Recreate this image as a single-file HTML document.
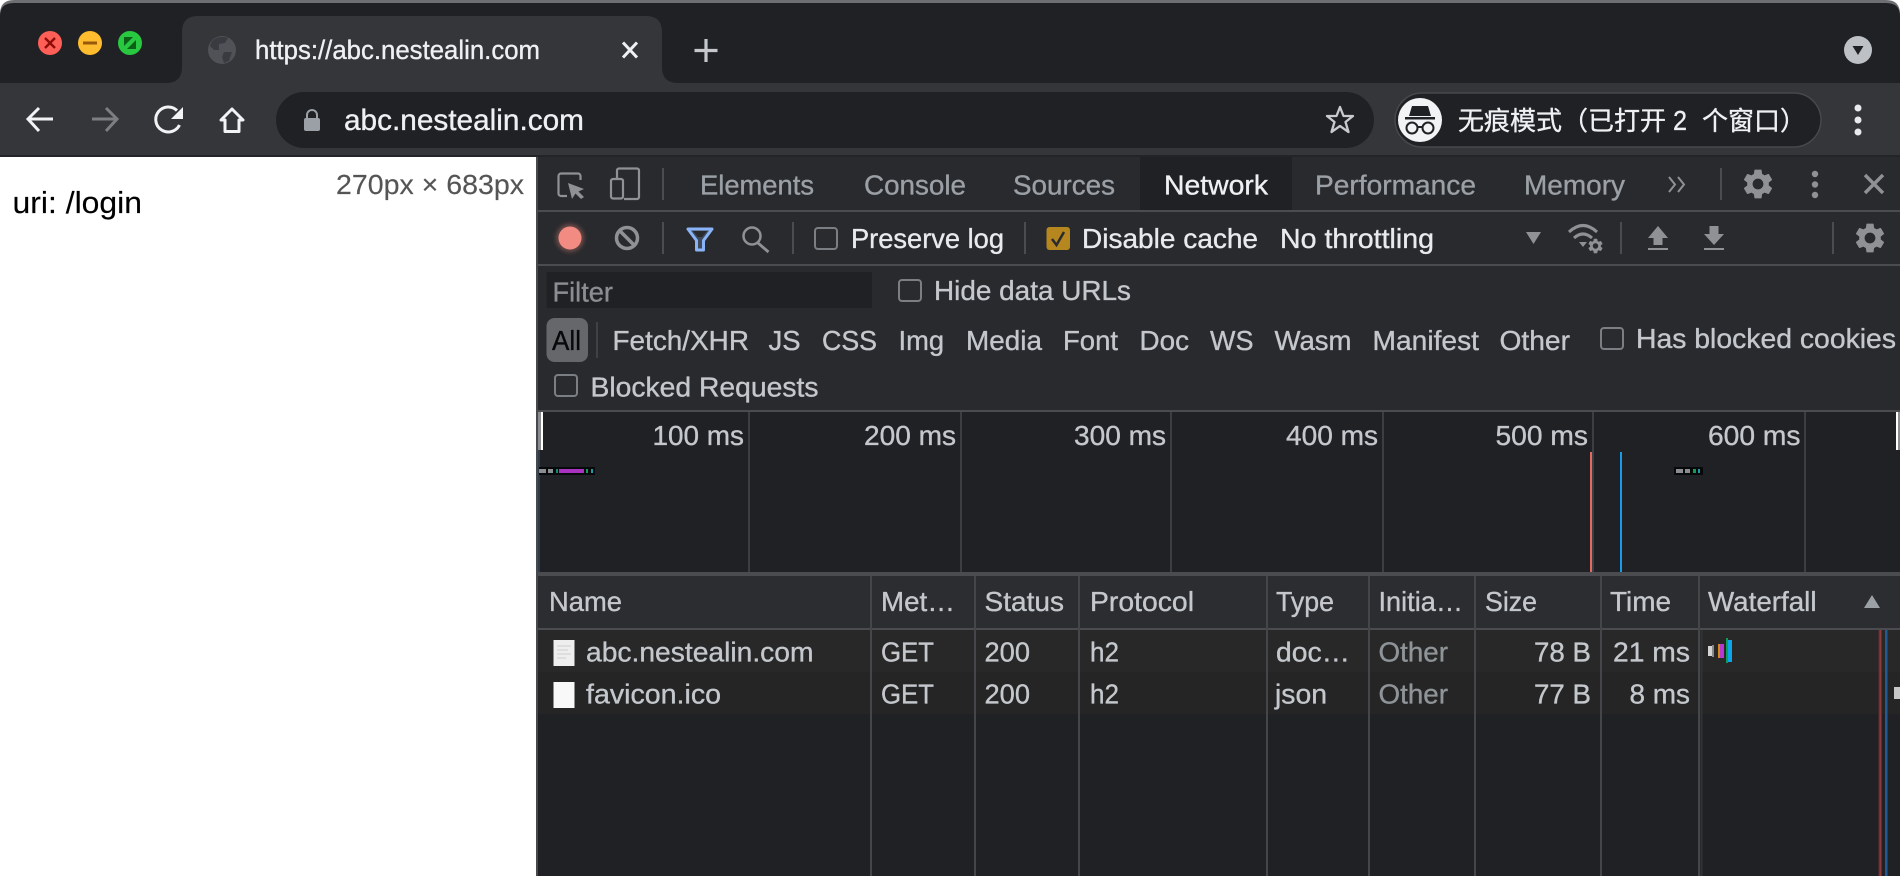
<!DOCTYPE html>
<html lang="zh">
<head>
<meta charset="utf-8">
<title>DevTools Network</title>
<style>
html,body{margin:0;padding:0;background:#fff;width:1900px;height:876px;overflow:hidden}
svg{display:block}
text{font-family:"Liberation Sans","Noto Sans CJK SC",sans-serif;font-size:27.5px;fill:#c4c8cd;stroke:#c4c8cd;stroke-width:.35}
.t{fill:#9aa0a6;stroke:#9aa0a6}
.w{fill:#eef0f2;stroke:#eef0f2}
.o{fill:#8f9499;stroke:#8f9499}
.lbl{fill:#c4c8cd;stroke:#c4c8cd}
.br{fill:#e8eaed;stroke:#e8eaed}
.cb{fill:#2a2b2e;stroke:#7b7e82;stroke-width:2}
.v{stroke:#4a4c50;stroke-width:2}
.col{stroke:#444649;stroke-width:2}
.grid{stroke:#3c3e42;stroke-width:2}
</style>
</head>
<body>
<svg width="1900" height="876" viewBox="0 0 1900 876" xmlns="http://www.w3.org/2000/svg">
<defs>
<path id="gear" d="M19.14 12.94c.04-.3.06-.61.06-.94 0-.32-.02-.64-.07-.94l2.03-1.58a.49.49 0 0 0 .12-.61l-1.92-3.32a.488.488 0 0 0-.59-.22l-2.39.96c-.5-.38-1.03-.7-1.62-.94l-.36-2.54a.484.484 0 0 0-.48-.41h-3.84c-.24 0-.43.17-.47.41l-.36 2.54c-.59.24-1.13.57-1.62.94l-2.39-.96c-.22-.08-.47 0-.59.22L2.74 8.87c-.12.21-.08.47.12.61l2.03 1.58c-.05.3-.09.63-.09.94s.02.64.07.94l-2.03 1.58a.49.49 0 0 0-.12.61l1.92 3.32c.12.22.37.29.59.22l2.39-.96c.5.38 1.03.7 1.62.94l.36 2.54c.05.24.24.41.48.41h3.84c.24 0 .44-.17.47-.41l.36-2.54c.59-.24 1.13-.56 1.62-.94l2.39.96c.22.08.47 0 .59-.22l1.92-3.32c.12-.22.07-.47-.12-.61l-2.01-1.58zM12 15.6c-1.98 0-3.6-1.62-3.6-3.6s1.62-3.6 3.6-3.6 3.6 1.62 3.6 3.6-1.62 3.6-3.6 3.6z"/>
<filter id="glow" x="-50%" y="-50%" width="200%" height="200%"><feGaussianBlur stdDeviation="2"/></filter>
</defs>

<!-- window background -->
<rect width="1900" height="876" fill="#fff"/>
<path d="M0 157V14Q0 0 14 0H1886Q1900 0 1900 14V157Z" fill="#6e6f72"/>
<path d="M0 157V16Q0 3 14 3H1886Q1900 3 1900 16V157Z" fill="#202124"/>
<!-- toolbar -->
<rect x="0" y="83" width="1900" height="73" fill="#35363a"/>
<rect x="0" y="155" width="1900" height="2" fill="#232427"/>
<!-- tab -->
<path d="M166 83Q182 83 182 67V32Q182 16 198 16H646Q662 16 662 32V67Q662 83 678 83Z" fill="#35363a"/>

<!-- traffic lights -->
<circle cx="50" cy="43" r="12" fill="#ff5f57"/>
<path d="M45 38L55 48M55 38L45 48" stroke="#8e0d08" stroke-width="2.4"/>
<circle cx="90" cy="43" r="12" fill="#febc2e"/>
<rect x="83" y="41.500" width="14" height="3" fill="#985a0a"/>
<circle cx="130" cy="43" r="12" fill="#28c840"/>
<path d="M124 37H133L124 46ZM136 49H127L136 40Z" fill="#0b5f17"/>

<!-- favicon globe -->
<circle cx="222" cy="50" r="14" fill="#505257"/>
<path d="M213 40Q220 35 228 38L225 43L219 44L219 50L214 50L210 46Q211 42 213 40ZM224 52L232 52L229 61L224 63L222 57Z" fill="#3a3b40"/>
<text x="255" y="59" style="font-size:26.5px" class="w" textLength="285" lengthAdjust="spacingAndGlyphs">https://abc.nestealin.com</text>
<path d="M623 42.500L637 57.500M637 42.500L623 57.500" stroke="#eef0f2" stroke-width="3" fill="none"/>
<path d="M706 39V62M694.500 50.500H717.500" stroke="#c4c7cc" stroke-width="3.200" fill="none"/>

<!-- profile dropdown -->
<circle cx="1858" cy="50" r="14" fill="#bdc1c6"/>
<path d="M1852.500 46H1863.500L1858 55Z" fill="#202124"/>

<!-- nav icons -->
<path d="M53 119H29M39 108L28 119L39 131" stroke="#f1f3f4" stroke-width="3" fill="none"/>
<path d="M92 119H116M106 108L117 119L106 131" stroke="#7c7e82" stroke-width="3" fill="none"/>
<path d="M179.500 125A12.500 12.500 0 1 1 177 110.500" stroke="#f1f3f4" stroke-width="3" fill="none"/>
<path d="M183 107V119H171Z" fill="#f1f3f4"/>
<path d="M232 109L243 120H239V131.500H225V120H221Z" stroke="#f1f3f4" stroke-width="3" fill="none" stroke-linejoin="round"/>

<!-- address bar -->
<rect x="276" y="92" width="1098" height="56" rx="28" fill="#202124"/>
<path d="M307 119V115A5 5 0 0 1 317 115V119" stroke="#9aa0a6" stroke-width="2" fill="none"/>
<rect x="304" y="118" width="16" height="13" rx="2" fill="#9aa0a6"/>
<text x="344" y="130" style="font-size:29.5px" class="w" textLength="240" lengthAdjust="spacingAndGlyphs">abc.nestealin.com</text>
<path d="M1340 107L1343.500 116H1353L1345.500 122L1348.500 132L1340 126L1331.500 132L1334.500 122L1327 116H1336.500Z" stroke="#c8cacd" stroke-width="2.300" fill="none" stroke-linejoin="round"/>

<!-- incognito pill -->
<rect x="1395" y="93" width="426" height="54" rx="27" fill="#202124" stroke="#47484c" stroke-width="1.500"/>
<circle cx="1420" cy="120" r="22" fill="#f1f3f4"/>
<path d="M1412 106L1428 106L1431 116H1409Z" fill="#202124"/>
<rect x="1405" y="117" width="30" height="2.500" fill="#202124"/>
<circle cx="1412" cy="128" r="5.500" fill="none" stroke="#202124" stroke-width="2"/>
<circle cx="1428" cy="128" r="5.500" fill="none" stroke="#202124" stroke-width="2"/>
<path d="M1417 127H1423" stroke="#202124" stroke-width="2"/>
<text x="1458" y="130" style="font-size:26px" class="w">无痕模式（已打开</text>
<text x="1673" y="130" style="font-size:28px" class="w" textLength="14" lengthAdjust="spacingAndGlyphs">2</text>
<text x="1702" y="130" style="font-size:26px" class="w">个窗口）</text>
<circle cx="1858" cy="108" r="3.500" fill="#e8eaed"/>
<circle cx="1858" cy="120" r="3.500" fill="#e8eaed"/>
<circle cx="1858" cy="132" r="3.500" fill="#e8eaed"/>

<!-- page -->
<rect x="0" y="157" width="537" height="719" fill="#fff"/>
<text x="336" y="194" style="font-size:27.5px;fill:#555;stroke:#555;stroke-width:.15" textLength="188" lengthAdjust="spacingAndGlyphs">270px × 683px</text>
<text x="12.500" y="213" style="font-size:31px;fill:#000;stroke:#000;stroke-width:.15" textLength="129.500" lengthAdjust="spacingAndGlyphs">uri: /login</text>

<!-- devtools base -->
<rect x="537" y="157" width="1363" height="719" fill="#292a2d"/>
<rect x="536" y="157" width="2" height="719" fill="#47494d"/>

<!-- tabs bar -->
<rect x="1140" y="157" width="152" height="53" fill="#202124"/>
<rect x="538" y="210" width="1362" height="2" fill="#4a4c50"/>
<path d="M567 196H561A2.500 2.500 0 0 1 558.500 193.500V176A2.500 2.500 0 0 1 561 173.500H578A2.500 2.500 0 0 1 580.500 176V180" stroke="#8f9194" stroke-width="2.200" fill="none"/>
<path d="M568 183L584 189L578.500 191.500L584 197L581 199L575.500 193.500L572 199Z" fill="#8f9194"/>
<path d="M617 178V170.500A2 2 0 0 1 619 168.500H637A2 2 0 0 1 639 170.500V197A2 2 0 0 1 637 199H624" stroke="#8f9194" stroke-width="2.200" fill="none"/>
<rect x="611" y="179" width="12" height="19.500" rx="2" stroke="#8f9194" stroke-width="2.200" fill="none"/>
<path d="M663 168V200" class="v"/>
<text x="700" y="194.500" class="t" textLength="114" lengthAdjust="spacingAndGlyphs">Elements</text>
<text x="864" y="194.500" class="t" textLength="102" lengthAdjust="spacingAndGlyphs">Console</text>
<text x="1013" y="194.500" class="t" textLength="102" lengthAdjust="spacingAndGlyphs">Sources</text>
<text x="1164" y="194.500" class="w" textLength="104" lengthAdjust="spacingAndGlyphs">Network</text>
<text x="1315" y="194.500" class="t" textLength="161" lengthAdjust="spacingAndGlyphs">Performance</text>
<text x="1524" y="194.500" class="t" textLength="101" lengthAdjust="spacingAndGlyphs">Memory</text>
<path d="M1669 177L1675 184.500L1669 192M1678 177L1684 184.500L1678 192" stroke="#8f9194" stroke-width="2" fill="none"/>
<path d="M1721 168V200" class="v"/>
<use href="#gear" transform="translate(1740 166) scale(1.5)" fill="#8f9194"/>
<circle cx="1815" cy="174" r="3.200" fill="#8f9194"/>
<circle cx="1815" cy="184.500" r="3.200" fill="#8f9194"/>
<circle cx="1815" cy="195" r="3.200" fill="#8f9194"/>
<path d="M1865 175L1883 193M1883 175L1865 193" stroke="#8f9194" stroke-width="3.400" fill="none"/>

<!-- network toolbar -->
<rect x="538" y="264" width="1362" height="2" fill="#4a4c50"/>
<circle cx="570" cy="238" r="14" fill="#f28b82" opacity=".35" filter="url(#glow)"/>
<circle cx="570" cy="238" r="11.500" fill="#f28b82"/>
<circle cx="627" cy="238" r="10.500" fill="none" stroke="#8f9194" stroke-width="3.500"/>
<path d="M620 231L634 245" stroke="#8f9194" stroke-width="3.500"/>
<path d="M663 222V254" class="v"/>
<path d="M688 229H712L703.500 240.500V250H696.500V240.500Z" fill="#3f4a58" stroke="#8ab4f8" stroke-width="3" stroke-linejoin="round"/>
<path d="M693 231H707L702 237H698Z" fill="#2a2b2e"/>
<circle cx="752" cy="236" r="8.500" fill="none" stroke="#8f9194" stroke-width="2.500"/>
<path d="M758 243L768.500 252" stroke="#8f9194" stroke-width="2.800"/>
<path d="M793 222V254" class="v"/>
<rect x="815" y="228" width="22" height="21" rx="3" class="cb"/>
<text x="851" y="248" class="br" textLength="153" lengthAdjust="spacingAndGlyphs">Preserve log</text>
<path d="M1025 222V254" class="v"/>
<rect x="1046.500" y="227" width="23.500" height="23" rx="3" fill="#b6871f"/>
<path d="M1052 239L1056.500 245L1064 232" stroke="#2a2b2e" stroke-width="2.500" fill="none"/>
<text x="1082" y="248" class="br" textLength="176" lengthAdjust="spacingAndGlyphs">Disable cache</text>
<text x="1280" y="248" class="br" textLength="154" lengthAdjust="spacingAndGlyphs">No throttling</text>
<path d="M1526 232H1541L1533.500 244Z" fill="#8f9194"/>
<!-- wifi -->
<path d="M1569 232Q1583 219 1597 232" stroke="#8f9194" stroke-width="3" fill="none"/>
<path d="M1574 238Q1583 230 1592 238" stroke="#8f9194" stroke-width="3" fill="none"/>
<path d="M1579 242H1587L1583 247Z" fill="#8f9194"/>
<use href="#gear" transform="translate(1586.500 237) scale(.75)" fill="#8f9194"/>
<path d="M1621 222V254" class="v"/>
<path d="M1658 226L1668 238H1662.500V245H1653.500V238H1648Z" fill="#8f9194"/>
<rect x="1648" y="248" width="20" height="2" fill="#8f9194"/>
<path d="M1714 245L1704 234H1709.500V226H1718.500V234H1724Z" fill="#8f9194"/>
<rect x="1704" y="248" width="20" height="2" fill="#8f9194"/>
<path d="M1833 222V254" class="v"/>
<use href="#gear" transform="translate(1852 220) scale(1.5)" fill="#8f9194"/>

<!-- filter area -->
<rect x="546.500" y="272" width="325.500" height="36" fill="#202124"/>
<text x="552.500" y="301.500" style="fill:#8a8d91;stroke:#8a8d91" textLength="60.500" lengthAdjust="spacingAndGlyphs">Filter</text>
<rect x="899" y="280" width="22" height="21" rx="3" class="cb"/>
<text x="934" y="300" class="lbl" textLength="197" lengthAdjust="spacingAndGlyphs">Hide data URLs</text>
<rect x="546.500" y="318" width="41.500" height="44" rx="8" fill="#66676a"/>
<text x="552" y="350" style="fill:#08090a;stroke:#08090a" textLength="29" lengthAdjust="spacingAndGlyphs">All</text>
<path d="M597 322V358" stroke="#3f4145" stroke-width="2"/>
<text x="612.500" y="350" class="lbl" textLength="136.500" lengthAdjust="spacingAndGlyphs">Fetch/XHR</text>
<text x="768.500" y="350" class="lbl" textLength="32" lengthAdjust="spacingAndGlyphs">JS</text>
<text x="822" y="350" class="lbl" textLength="55" lengthAdjust="spacingAndGlyphs">CSS</text>
<text x="898.500" y="350" class="lbl" textLength="45.500" lengthAdjust="spacingAndGlyphs">Img</text>
<text x="966" y="350" class="lbl" textLength="76" lengthAdjust="spacingAndGlyphs">Media</text>
<text x="1063" y="350" class="lbl" textLength="55" lengthAdjust="spacingAndGlyphs">Font</text>
<text x="1139.500" y="350" class="lbl" textLength="49.500" lengthAdjust="spacingAndGlyphs">Doc</text>
<text x="1210" y="350" class="lbl" textLength="43.500" lengthAdjust="spacingAndGlyphs">WS</text>
<text x="1274.500" y="350" class="lbl" textLength="77" lengthAdjust="spacingAndGlyphs">Wasm</text>
<text x="1372.500" y="350" class="lbl" textLength="106.500" lengthAdjust="spacingAndGlyphs">Manifest</text>
<text x="1499.500" y="350" class="lbl" textLength="70.500" lengthAdjust="spacingAndGlyphs">Other</text>
<rect x="1601" y="328" width="22" height="21" rx="3" class="cb"/>
<text x="1636" y="348" class="lbl" textLength="260" lengthAdjust="spacingAndGlyphs">Has blocked cookies</text>
<rect x="555" y="375" width="22" height="21" rx="3" class="cb"/>
<text x="590.500" y="396.500" class="lbl" textLength="228" lengthAdjust="spacingAndGlyphs">Blocked Requests</text>
<rect x="538" y="410" width="1362" height="2" fill="#4a4c50"/>

<!-- overview -->
<rect x="538" y="412" width="1362" height="160" fill="#202124"/>
<path d="M749 412V572M961 412V572M1171 412V572M1383 412V572M1593 412V572M1805 412V572" class="grid"/>
<rect x="538" y="412" width="2" height="160" fill="#2f3a4a"/>
<rect x="538" y="412" width="5" height="38" fill="#8b8c8f"/>
<rect x="541" y="412" width="2" height="38" fill="#fff"/>
<rect x="1896" y="412" width="4" height="38" fill="#8b8c8f"/>
<rect x="1896" y="412" width="2" height="38" fill="#fff"/>
<text x="652.500" y="445" class="lbl" textLength="91.500" lengthAdjust="spacingAndGlyphs">100 ms</text>
<text x="864" y="445" class="lbl" textLength="92" lengthAdjust="spacingAndGlyphs">200 ms</text>
<text x="1074" y="445" class="lbl" textLength="92" lengthAdjust="spacingAndGlyphs">300 ms</text>
<text x="1286" y="445" class="lbl" textLength="92" lengthAdjust="spacingAndGlyphs">400 ms</text>
<text x="1495.500" y="445" class="lbl" textLength="92.500" lengthAdjust="spacingAndGlyphs">500 ms</text>
<text x="1708" y="445" class="lbl" textLength="92.500" lengthAdjust="spacingAndGlyphs">600 ms</text>
<rect x="539" y="467" width="56" height="8" fill="#08090a"/>
<rect x="539" y="469" width="7" height="4" fill="#8c8d90"/>
<rect x="548" y="469" width="5" height="4" fill="#8c8d90"/>
<rect x="556" y="469" width="2" height="4" fill="#0f8a73"/>
<rect x="559" y="469" width="25" height="4" fill="#a932c0"/>
<rect x="586" y="469" width="2" height="4" fill="#0f9d58"/>
<rect x="591" y="469" width="2" height="4" fill="#1b9aa8"/>
<rect x="1590" y="452" width="2" height="120" fill="#e46962"/>
<rect x="1620" y="452" width="2" height="120" fill="#1a9ae8"/>
<rect x="1674" y="467" width="29" height="8" fill="#08090a"/>
<rect x="1676" y="469" width="7" height="4" fill="#8c8d90"/>
<rect x="1685" y="469" width="5" height="4" fill="#8c8d90"/>
<rect x="1693" y="469" width="3" height="4" fill="#0f9d58"/>
<rect x="1698" y="469" width="2" height="4" fill="#1b9aa8"/>
<rect x="538" y="572" width="1362" height="4" fill="#4a4c50"/>

<!-- table -->
<rect x="538" y="576" width="1362" height="52" fill="#2c2d30"/>
<rect x="538" y="630" width="1362" height="246" fill="#202124"/>
<rect x="538" y="630" width="1362" height="42" fill="#272827"/>
<rect x="538" y="672" width="1362" height="42" fill="#242524"/>
<rect x="538" y="628" width="1362" height="2" fill="#4a4c50"/>
<path d="M871 576V876M975 576V876M1079 576V876M1267 576V876M1369 576V876M1475 576V876M1601 576V876M1699 576V876" class="col"/>
<path d="M1701.500 630V876" stroke="#303236" stroke-width="2"/>

<text x="549" y="611" class="lbl" textLength="73" lengthAdjust="spacingAndGlyphs">Name</text>
<text x="881" y="611" class="lbl" textLength="74" lengthAdjust="spacingAndGlyphs">Met…</text>
<text x="984.500" y="611" class="lbl" textLength="79.500" lengthAdjust="spacingAndGlyphs">Status</text>
<text x="1090" y="611" class="lbl" textLength="104" lengthAdjust="spacingAndGlyphs">Protocol</text>
<text x="1276" y="611" class="lbl" textLength="58" lengthAdjust="spacingAndGlyphs">Type</text>
<text x="1378.500" y="611" class="lbl" textLength="84.500" lengthAdjust="spacingAndGlyphs">Initia…</text>
<text x="1485" y="611" class="lbl" textLength="52" lengthAdjust="spacingAndGlyphs">Size</text>
<text x="1610" y="611" class="lbl" textLength="61" lengthAdjust="spacingAndGlyphs">Time</text>
<text x="1708" y="611" class="lbl" textLength="108.500" lengthAdjust="spacingAndGlyphs">Waterfall</text>
<path d="M1864 608L1872 595L1880 608Z" fill="#9aa0a6"/>

<!-- row 1 -->
<rect x="553.500" y="640" width="21" height="26" fill="#eeeeee"/>
<path d="M557 646H571M557 650H568M557 654H571M557 658H566" stroke="#d8d8d8" stroke-width="1.500"/>
<text x="586" y="661.500" class="lbl" textLength="227.500" lengthAdjust="spacingAndGlyphs">abc.nestealin.com</text>
<text x="881" y="661.500" class="lbl" textLength="53" lengthAdjust="spacingAndGlyphs">GET</text>
<text x="984.500" y="661.500" class="lbl" textLength="45.500" lengthAdjust="spacingAndGlyphs">200</text>
<text x="1090" y="661.500" class="lbl" textLength="29" lengthAdjust="spacingAndGlyphs">h2</text>
<text x="1276" y="661.500" class="lbl" textLength="74" lengthAdjust="spacingAndGlyphs">doc…</text>
<text x="1378.500" y="661.500" class="o" textLength="69.500" lengthAdjust="spacingAndGlyphs">Other</text>
<text x="1534" y="661.500" class="lbl" textLength="57" lengthAdjust="spacingAndGlyphs">78 B</text>
<text x="1613" y="661.500" class="lbl" textLength="77" lengthAdjust="spacingAndGlyphs">21 ms</text>

<!-- row 2 -->
<rect x="553.500" y="682" width="21" height="26" fill="#f8f8f8"/>
<text x="586" y="703.500" class="lbl" textLength="135" lengthAdjust="spacingAndGlyphs">favicon.ico</text>
<text x="881" y="703.500" class="lbl" textLength="53" lengthAdjust="spacingAndGlyphs">GET</text>
<text x="984.500" y="703.500" class="lbl" textLength="45.500" lengthAdjust="spacingAndGlyphs">200</text>
<text x="1090" y="703.500" class="lbl" textLength="29" lengthAdjust="spacingAndGlyphs">h2</text>
<text x="1275" y="703.500" class="lbl" textLength="52" lengthAdjust="spacingAndGlyphs">json</text>
<text x="1378.500" y="703.500" class="o" textLength="69.500" lengthAdjust="spacingAndGlyphs">Other</text>
<text x="1534" y="703.500" class="lbl" textLength="57" lengthAdjust="spacingAndGlyphs">77 B</text>
<text x="1629.500" y="703.500" class="lbl" textLength="60.500" lengthAdjust="spacingAndGlyphs">8 ms</text>

<!-- waterfall -->
<rect x="1708" y="646" width="5" height="10" fill="#d4d4d4"/>
<rect x="1712" y="645" width="2" height="12" fill="#8a8a8a"/>
<rect x="1718" y="644" width="2" height="14" fill="#d08a18"/>
<rect x="1720" y="644" width="4" height="14" fill="#b43ad2"/>
<rect x="1726" y="638" width="2" height="25" fill="#0f9d58"/>
<rect x="1728" y="640" width="4" height="22" fill="#0aa5ec"/>
<rect x="1878.500" y="630" width="3.500" height="246" fill="#5e2c30"/>
<rect x="1879.500" y="630" width="1.500" height="246" fill="#8e3a3c"/>
<rect x="1885" y="630" width="2.500" height="246" fill="#1f5a96"/>
<rect x="1894" y="687" width="6" height="12" fill="#c8c8c8"/>
</svg>
</body>
</html>
